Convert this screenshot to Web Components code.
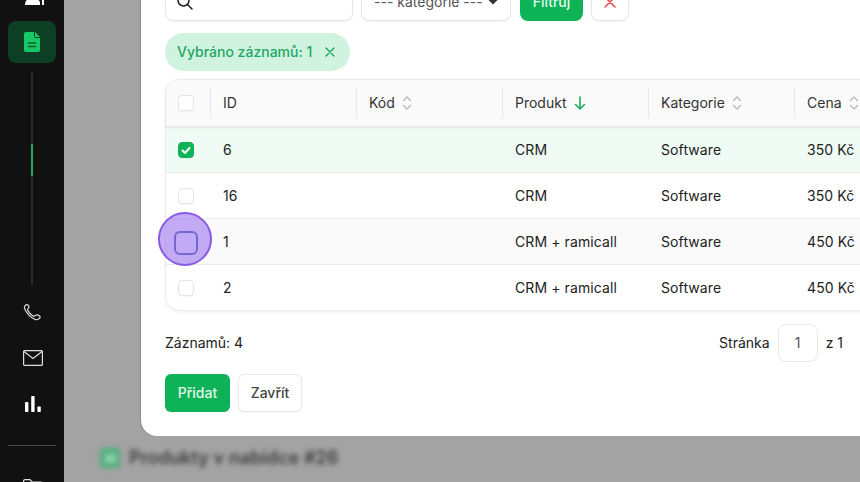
<!DOCTYPE html>
<html lang="cs"><head><meta charset="utf-8"><title>Produkty</title>
<style>
html,body{margin:0;height:482px;overflow:hidden}
body{font:14px/20px Inter,"Liberation Sans",sans-serif;color:#1f1f1f;background:#a3a3a3}
app-shell{height:482px}
</style></head><body>
<app-shell>
  <side-nav slot="nav"></side-nav>
  <page-behind slot="behind">Produkty v nabídce #26</page-behind>
  <modal-card slot="modal">
    <filter-bar></filter-bar>
    <selection-pill>Vybráno záznamů: 1</selection-pill>
    <data-table></data-table>
    <table-foot></table-foot>
    <modal-actions></modal-actions>
  </modal-card>
</app-shell>
<script>
const def=(name,html,init)=>customElements.define(name,class extends HTMLElement{
  constructor(){super();this.attachShadow({mode:'open'}).innerHTML=html;}
  connectedCallback(){init&&init(this)}
});
def('app-shell',`<style>
:host{display:flex;width:860px;overflow:hidden}
.main{flex:1;min-width:0;position:relative;display:flex;flex-direction:column;justify-content:flex-end;height:482px;overflow:hidden;padding:0 0 46px 77px;box-sizing:border-box}
.behind{position:absolute;left:36px;bottom:14px}
.modal{display:block;flex:none}
</style><slot name="nav"></slot><div class="main"><div class="behind"><slot name="behind"></slot></div><div class="modal"><slot name="modal"></slot></div></div>`);
def('side-nav',`<style>
:host{display:flex;flex:none;flex-direction:column;align-items:center;width:64px;height:482px;background:#111;overflow:hidden;box-sizing:border-box}
svg{display:block;flex:none}
.top{margin-top:-15px;height:21px;margin-bottom:15px;margin-left:5px}
.tile{width:48px;height:42px;flex:none;border-radius:8px;background:#0c3f23;display:flex;align-items:center;justify-content:center}
.track{width:2px;height:214px;margin-top:8px;background:#2b2b2b;display:flex;flex-direction:column;flex:none}
.thumb{width:2px;height:32px;background:#27a85c;margin-top:73px}
.ic{margin-left:2px}
hr{width:48px;height:1px;border:0;background:#4a4a4a;margin:33px 0 0;flex:none}
</style>
<svg class="top" width="20" height="21" viewBox="0 0 20 21"><circle cx="7" cy="7" r="5" fill="#fff"/><path d="M0 20c0-5 3-7 7.500-7s6.500 2 7.500 4v3z" fill="#fff"/><path d="M16 12h3.500v2H19v6h-2v-6h-1z" fill="#fff"/></svg>
<div class="tile"><svg width="16" height="20" viewBox="0 0 16 20"><path d="M2 0h9l5 5v13a2 2 0 0 1-2 2H2a2 2 0 0 1-2-2V2a2 2 0 0 1 2-2z" fill="#17c964"/><path d="M10.500 0v4.500a1 1 0 0 0 1 1H16" fill="none" stroke="#0c3f23" stroke-width="1"/><path d="M4.500 11h7M4.500 14.500h7" stroke="#0b5a30" stroke-width="1.300" stroke-linecap="round"/></svg></div>
<div class="track"><div class="thumb"></div></div>
<svg class="ic" style="margin-top:17px" width="20" height="20" viewBox="0 0 20 20"><path d="M2.500 3.200c-1.300 1-1.300 2.500-.6 4 2 4.300 5.300 7.800 9.700 10 1.200.6 2.600.6 3.900-.2 1.300-.6 1.900-1.700 1.500-2.500-.7-1.200-3.300-2.100-4.300-1.300-1 .6-1.500 1.500-2.400 1-2.600-1.600-4.400-3.600-5.700-6.100-.4-.9.600-1.500 1.100-2.200.7-1 .1-2.500-1-3C4.200 2.200 3.300 2.600 2.500 3.200z" fill="none" stroke="#d8d8d8" stroke-width="1.200"/></svg>
<svg class="ic" style="margin-top:28px" width="20" height="16" viewBox="0 0 20 16"><rect x=".6" y=".6" width="18.800" height="14.800" rx="1" fill="none" stroke="#ddd" stroke-width="1.200"/><path d="M1 1.500l9 7 9-7" fill="none" stroke="#ddd" stroke-width="1.200"/></svg>
<svg class="ic" style="margin-top:30px" width="16" height="16" viewBox="0 0 16 16"><rect x="0" y="6" width="3.400" height="10" rx=".8" fill="#fff"/><rect x="6.200" y="0" width="3.400" height="16" rx=".8" fill="#fff"/><rect x="12.400" y="10.500" width="3.400" height="5.500" rx=".8" fill="#fff"/></svg>
<hr>
<svg class="ic" style="margin-top:33px" width="20" height="16" viewBox="0 0 20 16"><path d="M.6 15V2a1.400 1.400 0 0 1 1.400-1.400h5l2 2.400h9a1.400 1.400 0 0 1 1.400 1.400V15z" fill="none" stroke="#ddd" stroke-width="1.200"/></svg>`);
def('page-behind',`<style>
:host{display:flex;align-items:center;gap:9px;filter:blur(2.500px);font-weight:600;font-size:18px;letter-spacing:.1px;color:#3c3c3c}
</style><svg width="20" height="20" viewBox="0 0 20 20"><rect x="0" y="0" width="20" height="20" rx="4" fill="#4fb07c"/><rect x="5" y="6" width="11" height="9" fill="#8fcfa9"/></svg><slot></slot>`);
def('modal-card',`<style>
:host{display:flex;flex-direction:column;align-items:flex-start;width:760px;box-sizing:border-box;padding:0 24px 24px;background:#fff;border-radius:16px 0 0 16px;box-shadow:-1px 0 0 #8d8d8d}
</style><slot></slot>`);
def('filter-bar',`<style>
:host{display:flex;gap:8px;height:38px;margin-bottom:12px}
.box{box-sizing:border-box;height:38px;border:1px solid #e6e6e6;border-radius:8px;background:#fff;box-shadow:0 1px 2px rgba(0,0,0,.05);display:flex;align-items:center}
.search{width:188px;padding-left:10px}
.sel{width:150px;margin-right:1px;padding:0 12px;justify-content:space-between;color:#555}
.go{width:63px;background:#0eb358;border-radius:8px;color:#e2f7ea;font-weight:500;display:flex;align-items:center;justify-content:center;box-sizing:border-box;height:38px}
.x{width:38px;justify-content:center}
</style>
<div class="box search"><svg width="18" height="18" viewBox="0 0 18 18" fill="none" stroke="#1f1f1f" stroke-width="1.500"><circle cx="7.500" cy="7.500" r="5.500"/><path d="M11.700 11.700L16 16" stroke-linecap="round"/></svg></div>
<div class="box sel"><span>--- kategorie ---</span><svg width="10" height="6" viewBox="0 0 10 6"><path d="M0 .5h10L5 5.500z" fill="#333"/></svg></div>
<div class="go">Filtruj</div>
<div class="box x"><svg width="12" height="12" viewBox="0 0 12 12" stroke="#e5484d" stroke-width="1.500" stroke-linecap="round"><path d="M1 1l10 10M11 1L1 11"/></svg></div>`);
def('selection-pill',`<style>
:host{display:inline-flex;align-items:center;box-sizing:border-box;height:38px;width:185px;padding:0 15px 0 12px;justify-content:space-between;background:#cff3df;border-radius:19px;color:#1ea763;font-weight:500;margin-bottom:8px}
</style><slot></slot><svg width="10" height="10" viewBox="0 0 10 10" stroke="#16a35a" stroke-width="1.400" stroke-linecap="round"><path d="M1 1l8 8M9 1L1 9"/></svg>`);
def('check-box',`<style>
:host{display:block;width:16px;height:16px;box-sizing:border-box;border:1px solid #e4e4e4;border-radius:4px;background:#fff;box-shadow:0 1px 1px rgba(0,0,0,.04)}
:host([on]){background:#0eb358;border-color:#0eb358}
:host([focus]){width:24px;height:24px;margin:-3px -4px -5px;background:transparent;border:2px solid #5d78b0;border-radius:6px;box-shadow:none}
svg{display:none}:host([on]) svg{display:block}
</style><svg width="14" height="14" viewBox="0 0 14 14" fill="none" stroke="#fff" stroke-width="2" stroke-linecap="round" stroke-linejoin="round"><path d="M3.500 7.500l2.500 2.500 4.500-5"/></svg>`);
const sort='<svg width="10" height="14" viewBox="0 0 10 14" fill="none" stroke="#b5b5b5" stroke-width="1.200" stroke-linecap="round" stroke-linejoin="round"><path d="M1.500 4.500L5 1l3.500 3.500M1.500 9.500L5 13l3.500-3.500"/></svg>';
const down='<svg width="12" height="14" viewBox="0 0 12 14" fill="none" stroke="#18b060" stroke-width="1.600" stroke-linecap="round" stroke-linejoin="round"><path d="M6 1v12M1.500 8.500L6 13l4.500-4.500"/></svg>';
const rows=[['6','CRM','Software','350 Kč',1],['16','CRM','Software','350 Kč',0],['1','CRM + ramicall','Software','450 Kč',2],['2','CRM + ramicall','Software','450 Kč',0]];
const cols='grid-template-columns:44px 146px 146px 146px 146px 146px';
def('data-table',`<style>
:host{display:block;position:relative;width:760px;box-sizing:border-box;border:1px solid #ececec;border-radius:14px;box-shadow:0 1px 3px rgba(0,0,0,.06);margin-bottom:13px}
.r{display:grid;${cols};align-items:center;font-weight:400;letter-spacing:.1px;color:#222}
.r>div{padding-left:13px;display:flex;align-items:center}
.r>.c{padding:0 0 0 12px}
.h{height:47px;box-sizing:border-box;background:#fafafa;border-radius:13px 0 0 0;border-bottom:1px solid #e9e9e9;box-shadow:0 1px 2px rgba(0,0,0,.08);font-weight:400;letter-spacing:0;color:#333;position:relative}
.h>div{height:30px;border-left:1px solid #e8e8e8;gap:7px;padding-left:12px}
.h>.c{border:0}
.d{height:46px;box-sizing:border-box;border-bottom:1px solid #ececec}
.d.end{height:45px;border-bottom:0;border-radius:0 0 0 13px}
.sel{background:#f0fbf5}.hov{background:#fafafa}
.ring{position:absolute;left:-8px;top:132px;width:54px;height:54px;box-sizing:border-box;border-radius:50%;border:2px solid #8a5ae6;background:rgba(140,90,240,.5)}
</style>
<div class="r h"><div class="c"><check-box></check-box></div><div>ID</div><div>Kód ${sort}</div><div>Produkt ${down}</div><div>Kategorie ${sort}</div><div>Cena ${sort}</div></div>
${rows.map((r,i)=>`<div class="r d ${i==3?'end':''} ${r[4]==1?'sel':r[4]==2?'hov':''}"><div class="c"><check-box ${r[4]==1?'on':r[4]==2?'focus':''}></check-box></div><div>${r[0]}</div><div></div><div>${r[1]}</div><div>${r[2]}</div><div>${r[3]}</div></div>`).join('')}
<div class="ring"></div>`);
def('table-foot',`<style>
:host{display:flex;align-items:center;justify-content:space-between;width:678px;height:38px;margin-bottom:12px;color:#222}
.p{display:flex;align-items:center;gap:8px}
.i{width:40px;height:38px;box-sizing:border-box;border:1px solid #e8e8e8;border-radius:8px;display:flex;align-items:center;justify-content:center;color:#555}
</style><span>Záznamů: 4</span><div class="p"><span>Stránka</span><div class="i">1</div><span>z 1</span></div>`);
def('modal-actions',`<style>
:host{display:flex;gap:8px}
div{box-sizing:border-box;height:38px;border-radius:6px;display:flex;align-items:center;justify-content:center;font-weight:500}
.a{width:65px;background:#0eb358;color:#e2f7ea}
.b{width:64px;border:1px solid #e8e8e8;background:#fff;color:#444;box-shadow:0 1px 2px rgba(0,0,0,.04)}
</style><div class="a">Přidat</div><div class="b">Zavřít</div>`);
</script>
</body></html>
